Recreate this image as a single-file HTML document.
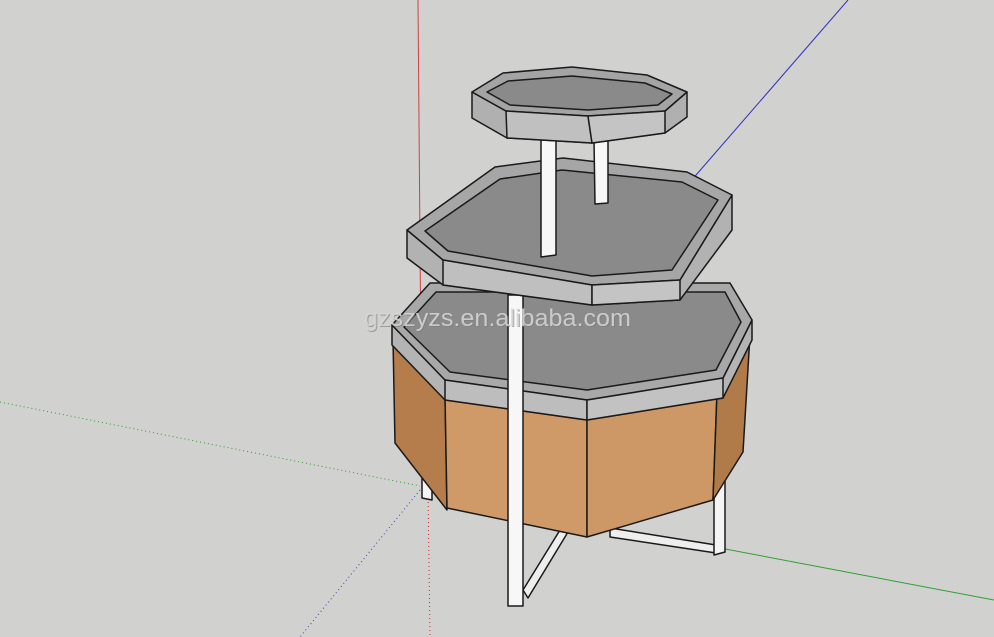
<!DOCTYPE html>
<html><head><meta charset="utf-8"><style>
html,body{margin:0;padding:0;background:#d1d1cf;}
svg{display:block}
</style></head><body>
<svg width="994" height="637" viewBox="0 0 994 637" xmlns="http://www.w3.org/2000/svg">
<rect width="994" height="637" fill="#d1d1cf"/>
<line x1="418" y1="0" x2="422" y2="487" stroke="#d04040" stroke-width="1"/>
<line x1="428" y1="490" x2="430" y2="637" stroke="#c03030" stroke-width="1" stroke-dasharray="1,3"/>
<line x1="0" y1="402" x2="420" y2="486" stroke="#2aa02a" stroke-width="1" stroke-dasharray="1,3"/>
<line x1="420" y1="490" x2="300" y2="637" stroke="#4040b0" stroke-width="1" stroke-dasharray="1,3"/>
<line x1="690" y1="182" x2="848" y2="0" stroke="#3030c0" stroke-width="1"/>
<line x1="720" y1="548" x2="994" y2="600" stroke="#30a030" stroke-width="1"/>

<g stroke="#1a1a1a" stroke-width="1.5" stroke-linejoin="round">
<polygon points="610,528 716,545 716,553 610,537" fill="#eeeeee"/>
<polygon points="714,450 725,448 725,552 714,555" fill="#f4f4f4"/>
<polygon points="422,470 432,470 432,500 422,498" fill="#f4f4f4"/>
<polygon points="523,590 560,530 568,532 528,598" fill="#eeeeee"/>

<polygon points="393,340 445,395 447,510 395,443" fill="#b57d4c"/>
<polygon points="445,395 587,415 587,537 447,508" fill="#cf9968"/>
<polygon points="587,415 717,393 713,500 587,537" fill="#cd9766"/>
<polygon points="717,393 750,335 743,452 713,500" fill="#b07a49"/>

<polygon points="392,325 392,345 445,400 587,420 723,398 752,340 752,320 723,378 587,400 445,380" fill="#b4b4b4"/>
<polygon points="392,325 430,283 730,283 752,320 723,378 587,400 445,380" fill="#a8a8a8"/>
<polygon points="404,327 436,292 725,292 741,322 716,370 587,390 450,372" fill="#8a8a8a"/>
<polygon points="445,380 587,400 587,420 445,400" fill="#bdbdbd"/>
<polygon points="587,400 723,378 723,398 587,420" fill="#c2c2c2"/>

<polygon points="508,295 523,295 523,606 508,606" fill="#f7f7f7"/>

<polygon points="407,230 407,258 443,285 592,305 680,300 732,230 732,195 680,280 592,285 443,260" fill="#b2b2b2"/>
<polygon points="407,230 495,167 563,158 687,172 732,195 680,280 592,285 443,260" fill="#a6a6a6"/>
<polygon points="425,231 500,179 562,170 682,182 718,200 672,270 592,276 448,251" fill="#8a8a8a"/>
<polygon points="443,260 592,285 592,305 443,285" fill="#bfbfbf"/>
<polygon points="592,285 680,280 680,300 592,305" fill="#c4c4c4"/>

<polygon points="541,138 556,138 556,255 541,257" fill="#f7f7f7"/>
<polygon points="594,140 608,140 608,203 595,204" fill="#f7f7f7"/>

<polygon points="472,92 472,118 507,138 592,143 665,133 687,117 687,92 665,111 588,116 506,111" fill="#b0b0b0"/>
<polygon points="472,92 503,73 572,67 647,75 687,92 665,111 588,116 506,111" fill="#a4a4a4"/>
<polygon points="487,92 508,81 572,76 645,83 672,94 658,105 588,110 510,105" fill="#8a8a8a"/>
<polygon points="506,111 588,116 592,143 507,138" fill="#c0c0c0"/>
<polygon points="588,116 665,111 665,133 592,143" fill="#c4c4c4"/>
</g>

<text x="365" y="327" font-family="Liberation Sans, sans-serif" font-size="24" fill="#7a7a7a" textLength="267" lengthAdjust="spacingAndGlyphs" opacity="0.6">gzszyzs.en.alibaba.com</text>
<text x="364" y="326" font-family="Liberation Sans, sans-serif" font-size="24" fill="#d8d8d8" textLength="267" lengthAdjust="spacingAndGlyphs" opacity="0.85">gzszyzs.en.alibaba.com</text>
</svg>
</body></html>
